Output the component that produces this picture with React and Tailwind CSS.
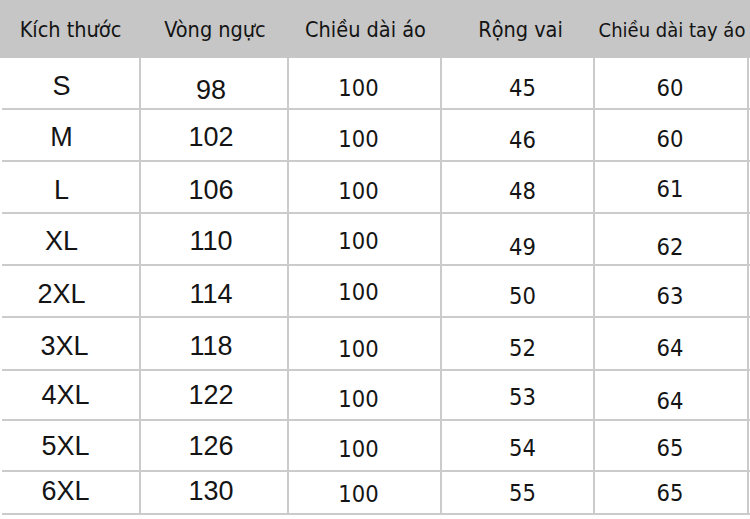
import React from "react";

const headers = ["Kích thước", "Vòng ngực", "Chiều dài áo", "Rộng vai", "Chiều dài tay áo"];
const headerSize = ["text-[21.5px]", "text-[21.5px]", "text-[21.5px]", "text-[21.5px]", "text-[20px]"];

const rows = [
  { h: "h-[52px]", c: ["S", "98", "100", "45", "60"], m: ["mt-[6px]", "mt-[14px]", "mt-[6px]", "mt-[6px]", "mt-[6px]"] },
  { h: "h-[52px]", c: ["M", "102", "100", "46", "60"], m: ["mt-[4px]", "mt-[4px]", "mt-[4px]", "mt-[6px]", "mt-[4px]"] },
  { h: "h-[52px]", c: ["L", "106", "100", "48", "61"], m: ["mt-[6px]", "mt-[6px]", "mt-[4px]", "mt-[4px]", "mt-[0px]"] },
  { h: "h-[52px]", c: ["XL", "110", "100", "49", "62"], m: ["mt-[4px]", "mt-[4px]", "mt-[0px]", "mt-[12px]", "mt-[12px]"] },
  { h: "h-[52px]", c: ["2XL", "114", "100", "50", "63"], m: ["mt-[6px]", "mt-[6px]", "mt-[-2px]", "mt-[6px]", "mt-[6px]"] },
  { h: "h-[53px]", c: ["3XL", "118", "100", "52", "64"], m: ["mt-[6px] ml-[6px]", "mt-[6px]", "mt-[6px]", "mt-[4px]", "mt-[4px]"] },
  { h: "h-[50px]", c: ["4XL", "122", "100", "53", "64"], m: ["mt-[0px] ml-[8px]", "mt-[0px]", "mt-[4px]", "mt-[0px]", "mt-[8px]"] },
  { h: "h-[51px]", c: ["5XL", "126", "100", "54", "65"], m: ["mt-[2px] ml-[8px]", "mt-[2px]", "mt-[2px]", "mt-[0px]", "mt-[0px]"] },
  { h: "h-[43px]", c: ["6XL", "130", "100", "55", "65"], m: ["mt-[-2px] ml-[8px]", "mt-[-2px]", "mt-[-2px]", "mt-[-4px]", "mt-[-4px]"] },
];

const colW = ["w-[141px]", "w-[148px]", "w-[153px]", "w-[153px]", "w-[154px]"];
const colPad = ["pr-[18px]", "pr-[6px]", "pr-[12px] pt-[6px]", "pl-[10px] pt-[6px]", "pr-[2px] pt-[6px]"];

const bigFont = { fontFamily: '"Liberation Sans", Arial, sans-serif' };
const smallFont = { fontFamily: '"DejaVu Sans Condensed", "DejaVu Sans", sans-serif' };

export default function App() {
  return (
    <div className="w-[750px] h-[519px] bg-white overflow-hidden text-[#141414]">
      <div className="flex h-[58px] bg-[#c6c6c6]">
        {headers.map((t, i) => (
          <div
            key={i}
            className={`${colW[i]} flex items-center justify-center ${headerSize[i]} leading-none pt-[2px] ${i === 3 ? "pl-[4px]" : ""}`}
            style={smallFont}
          >
            {t}
          </div>
        ))}
      </div>
      <div className="pl-[2px]">
        {rows.map((r, ri) => (
          <div key={ri} className={`flex ${r.h} border-b-2 border-[#cbcbcb]`}>
            {r.c.map((t, ci) => {
              const big = ci < 2;
              return (
                <div
                  key={ci}
                  className={`${ci === 0 ? "w-[139px]" : colW[ci]} flex items-center justify-center border-r-2 border-[#cbcbcb] ${colPad[ci]} ${
                    big ? "text-[27px]" : "text-[23.5px]"
                  } leading-none`}
                  style={big ? bigFont : smallFont}
                >
                  <span className={r.m[ci]}>{t}</span>
                </div>
              );
            })}
          </div>
        ))}
      </div>
    </div>
  );
}
